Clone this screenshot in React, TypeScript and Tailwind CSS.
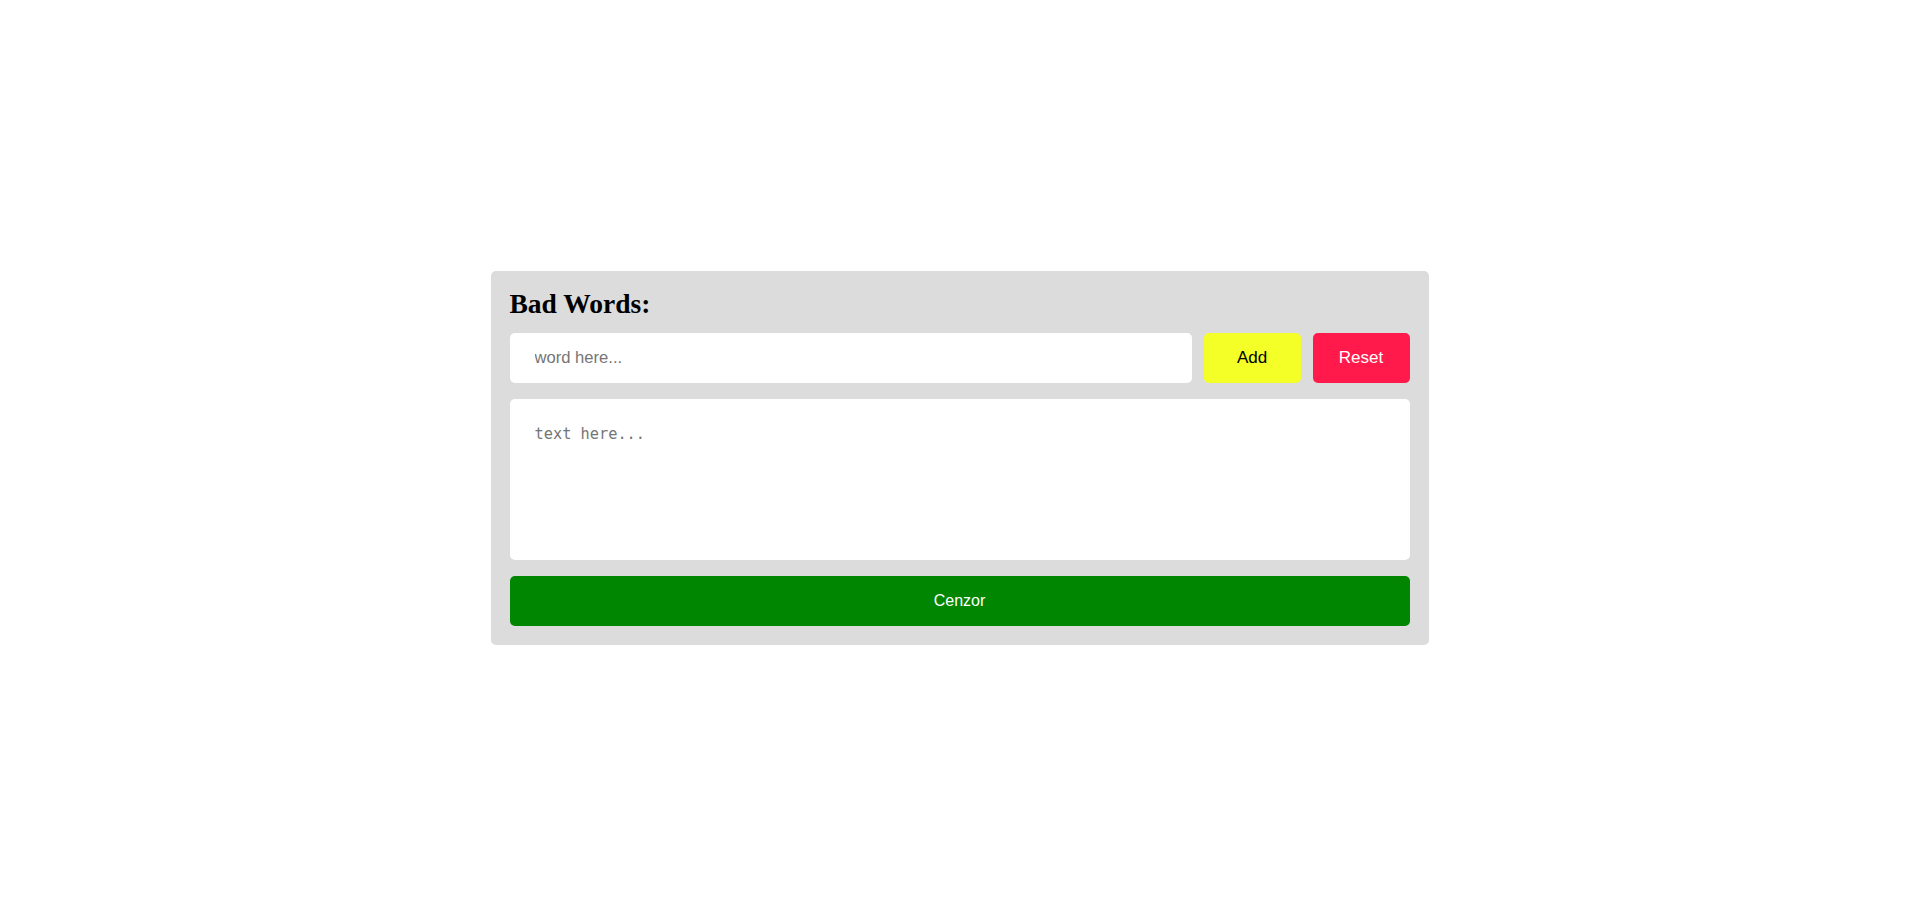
import React from "react";

export default function App() {
  return (
    <div className="min-h-screen w-full bg-white flex items-center justify-center">
      <div className="w-[938px] bg-[#dcdcdc] rounded-[5px] p-[19px] flex flex-col">
        <h2 className="font-['Liberation_Serif','Times_New_Roman',serif] text-[27.5px] font-bold leading-[28px] text-black mb-[15px]">
          Bad Words:
        </h2>
        <div className="flex gap-[12px] h-[50px] font-['Liberation_Sans',Arial,sans-serif]">
          <input
            type="text"
            placeholder="word here..."
            className="flex-1 h-[50px] bg-white rounded-[5px] px-[25px] text-[16.6px] outline-none placeholder:text-[#757575] text-black"
          />
          <button className="w-[97px] h-[50px] bg-[#f3ff27] rounded-[5px] text-[17px] text-black">
            Add
          </button>
          <button className="w-[97px] h-[50px] bg-[#ff1a4b] rounded-[5px] text-[17px] text-white">
            Reset
          </button>
        </div>
        <textarea
          placeholder="text here..."
          className="mt-[16px] h-[161px] w-full bg-white rounded-[5px] px-[25px] pt-[24px] pb-[10px] font-['DejaVu_Sans_Mono',monospace] text-[15.3px] outline-none resize-none placeholder:text-[#757575] text-black"
        />
        <button className="mt-[16px] h-[50px] w-full bg-[#008600] rounded-[5px] font-['Liberation_Sans',Arial,sans-serif] text-[16px] text-white">
          Cenzor
        </button>
      </div>
    </div>
  );
}
